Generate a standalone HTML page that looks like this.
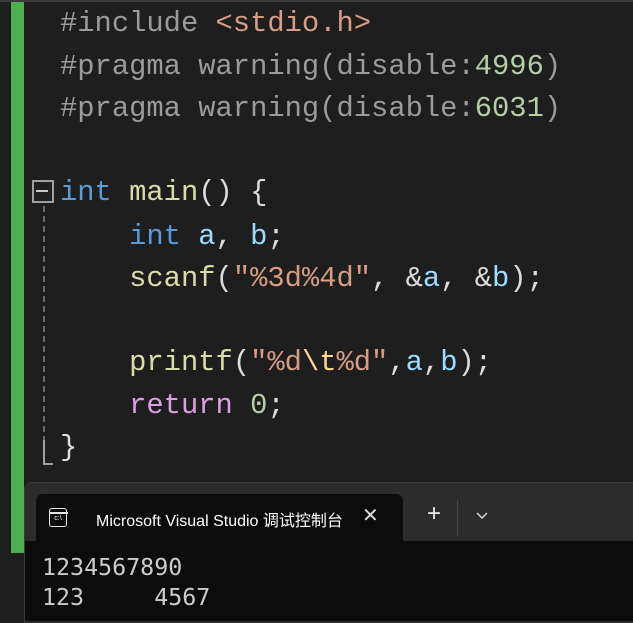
<!DOCTYPE html>
<html><head><meta charset="utf-8"><style>
body{margin:0;width:633px;height:615px;background:#1e1e1e;overflow:hidden;position:relative;font-family:"Liberation Mono",monospace}
.l{position:absolute;left:60px;font-size:28.8px;white-space:pre;line-height:42px;color:#dcdcdc}
.p{color:#9b9b9b}.s{color:#d69d85}.n{color:#b5cea8}.k{color:#569cd6}.f{color:#dcdcaa}.v{color:#9cdcfe}.r{color:#d8a0df}.e{color:#ffd68f}
</style></head><body>
<div style="position:absolute;left:0;top:0;width:633px;height:2px;background:#3a3a3a"></div>
<div style="position:absolute;left:11px;top:2px;width:13px;height:551px;background:#4caf50"></div>
<div class="l p" style="top:3px">#include <span class="s">&lt;stdio.h&gt;</span></div>
<div class="l p" style="top:46px">#pragma warning(disable:<span class="n">4996</span>)</div>
<div class="l p" style="top:88px">#pragma warning(disable:<span class="n">6031</span>)</div>
<div class="l" style="top:172px"><span class="k">int</span> <span class="f">main</span>() {</div>
<div class="l" style="top:216px">    <span class="k">int</span> <span class="v">a</span>, <span class="v">b</span>;</div>
<div class="l" style="top:258px">    <span class="f">scanf</span>(<span class="s">"%3d%4d"</span>, &amp;<span class="v">a</span>, &amp;<span class="v">b</span>);</div>
<div class="l" style="top:342px">    <span class="f">printf</span>(<span class="s">"%d<span class="e">\t</span>%d"</span>,<span class="v">a</span>,<span class="v">b</span>);</div>
<div class="l" style="top:385px">    <span class="r">return</span> <span class="n">0</span>;</div>
<div class="l" style="top:427px">}</div>
<div style="position:absolute;left:32px;top:180px;width:18px;height:19px;border:2px solid #a0a0a0"></div>
<div style="position:absolute;left:36px;top:190px;width:12px;height:2px;background:#c8c8c8"></div>
<div style="position:absolute;left:43px;top:206px;height:256px;border-left:2px dashed #6a6a6a"></div>
<div style="position:absolute;left:43px;top:440px;width:2px;height:25px;background:#a0a0a0"></div>
<div style="position:absolute;left:43px;top:463px;width:10px;height:2px;background:#a0a0a0"></div>
<div style="position:absolute;left:24px;top:482px;width:620px;height:140px;background:#2c2c2c;border-radius:8px 0 0 0;border-left:1px solid #3c3c3c;border-top:1px solid #3c3c3c"></div>
<div style="position:absolute;left:36px;top:494px;width:367px;height:60px;background:#0c0c0c;border-radius:7px 7px 0 0"></div>
<div style="position:absolute;left:25px;top:541px;width:610px;height:80px;background:#0c0c0c"></div>
<div style="position:absolute;left:49px;top:508px;width:16px;height:17px;border:1.5px solid #e8e8e8;border-radius:3px;font:7px 'Liberation Sans';color:#fff;line-height:20px;text-align:center">c:\</div>
<div style="position:absolute;left:49px;top:512px;width:19px;height:1.5px;background:#e8e8e8"></div>
<div style="position:absolute;left:96px;top:507px;font:16px 'Liberation Sans','Noto Sans CJK SC',sans-serif;color:#fff;white-space:nowrap;width:247px;overflow:hidden">Microsoft Visual Studio 调试控制台</div>
<div style="position:absolute;left:362px;top:503px;font:20px 'Liberation Sans',sans-serif;color:#ddd">✕</div>
<div style="position:absolute;left:427px;top:500px;font:24px 'Liberation Sans',sans-serif;color:#eee">+</div>
<div style="position:absolute;left:457px;top:500px;width:1px;height:36px;background:#4a4a4a"></div>
<svg style="position:absolute;left:475px;top:510px" width="14" height="10"><path d="M2 3 L7 8 L12 3" stroke="#ddd" stroke-width="1.4" fill="none"/></svg>
<div style="position:absolute;left:42px;top:553px;font:23.3px 'DejaVu Sans Mono',monospace;color:#cccccc;line-height:30px;white-space:pre">1234567890
123     4567</div>
</body></html>
